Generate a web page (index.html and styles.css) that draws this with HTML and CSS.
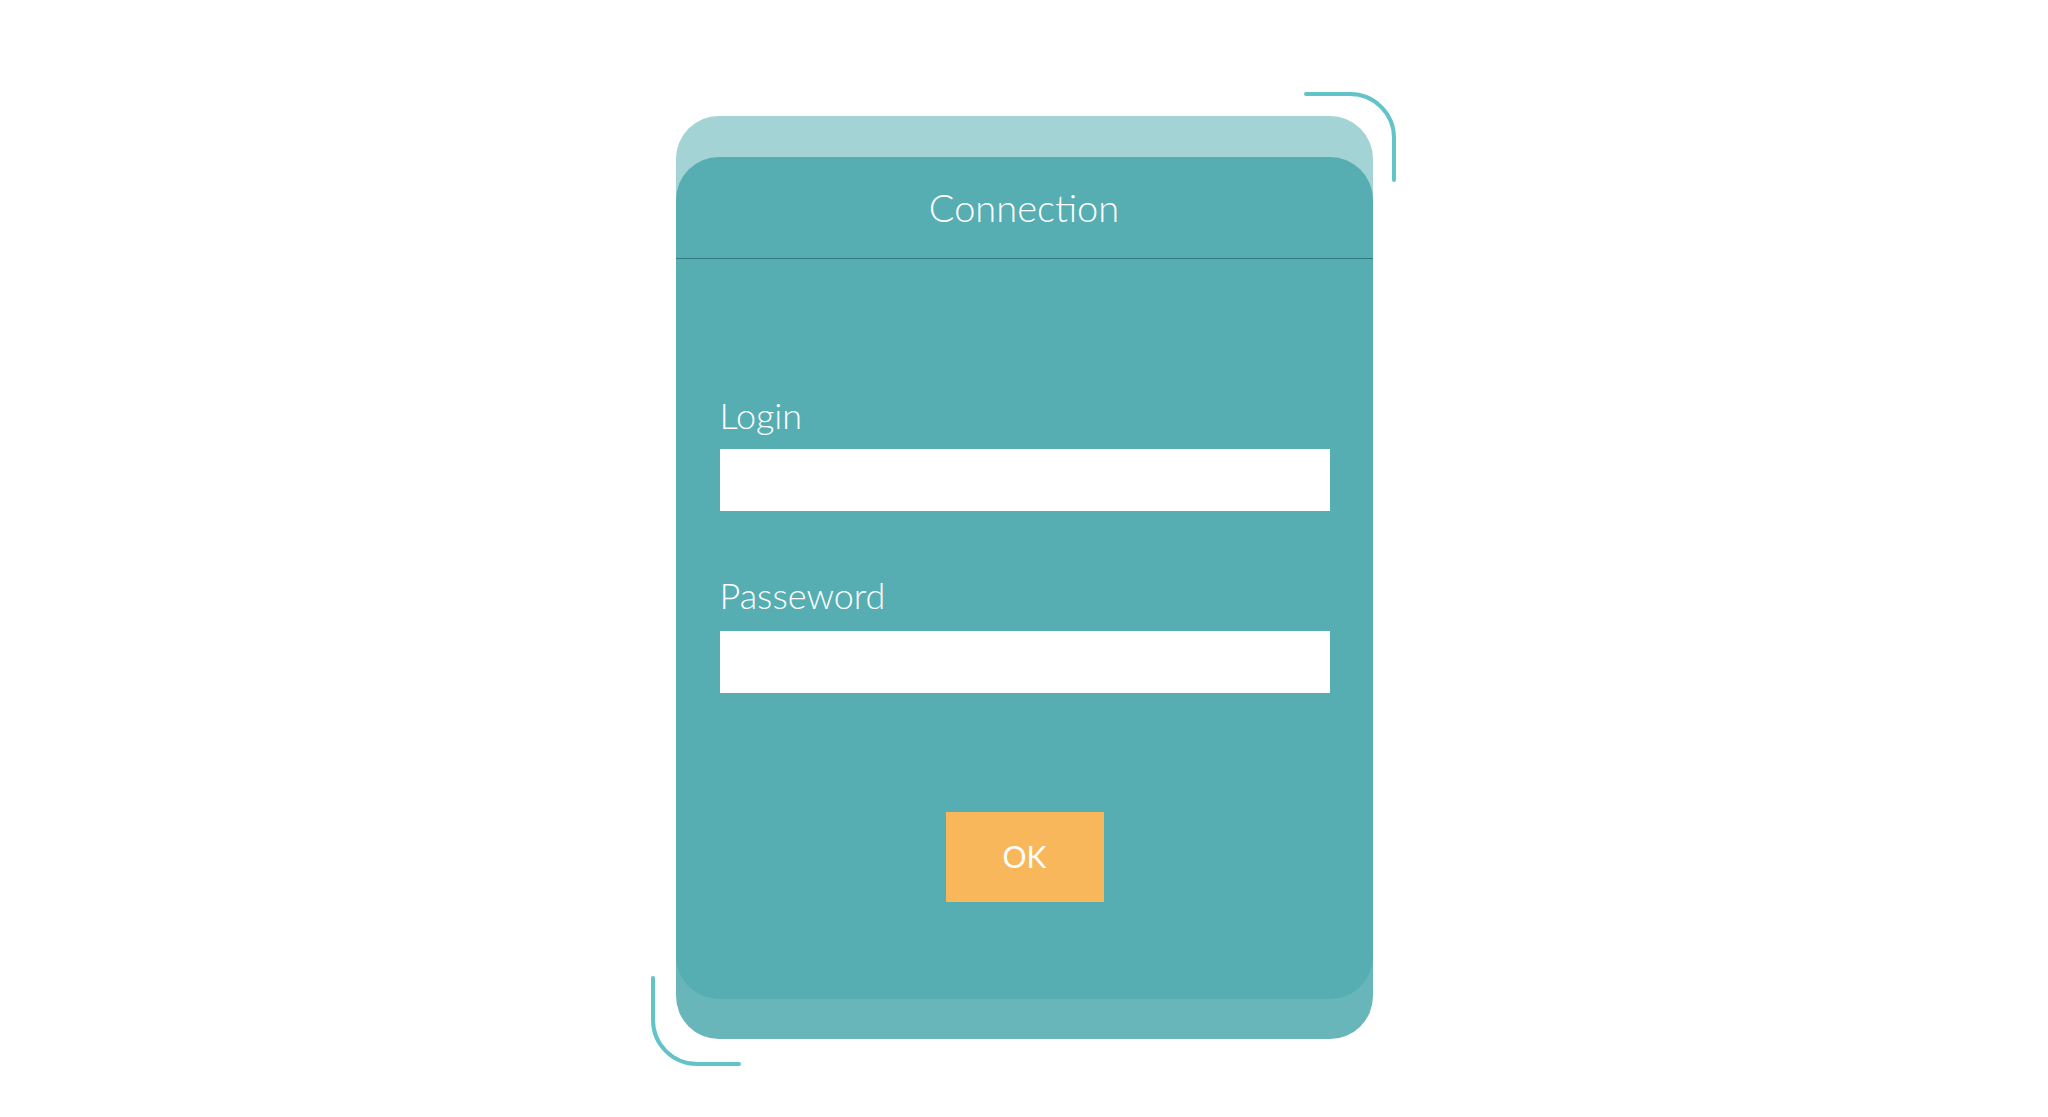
FILE: index.html
```html
<!DOCTYPE html>
<html lang="en">
<head>
<meta charset="utf-8">
<title>Connection</title>
<link rel="stylesheet" href="styles.css">
</head>
<body>
<main class="stage">
  <div class="frame">
    <svg class="bracket bracket-tr" width="92" height="90" viewBox="0 0 92 90" aria-hidden="true">
      <path d="M2 2 H46 A44 44 0 0 1 90 46 V88" fill="none" stroke="#62c4c8" stroke-width="4" stroke-linecap="round"/>
    </svg>
    <svg class="bracket bracket-bl" width="90" height="90" viewBox="0 0 90 90" aria-hidden="true">
      <path d="M2 2 V44 A44 44 0 0 0 46 88 H88" fill="none" stroke="#62c4c8" stroke-width="4" stroke-linecap="round"/>
    </svg>
    <section class="card">
      <header class="card-header">Connection</header>
      <form class="card-body">
        <label class="field-label" for="login">Login</label>
        <input class="field-input" id="login" type="text">
        <label class="field-label field-label-second" for="password">Passeword</label>
        <input class="field-input" id="password" type="password">
        <button class="ok-button" type="button">OK</button>
      </form>
    </section>
  </div>
</main>
</body>
</html>
```

FILE: styles.css
```css
html, body {
  margin: 0;
  padding: 0;
  background: #ffffff;
}

body {
  font-family: Lato, "Open Sans", "Liberation Sans", sans-serif;
  color: #ffffff;
}

.stage {
  box-sizing: border-box;
  min-height: 1117px;
  padding: 116px 0 78px;
  display: flex;
  justify-content: center;
  align-items: flex-start;
}

.frame {
  position: relative;
  width: 697px;
  padding: 41px 0 40px;
  border-radius: 43px;
  background: linear-gradient(#a3d3d4 0%, #a3d3d4 50%, #68b6ba 50%, #68b6ba 100%);
}

.bracket {
  position: absolute;
  display: block;
  overflow: visible;
}

.bracket-tr {
  top: -24px;
  right: -23px;
}

.bracket-bl {
  bottom: -27px;
  left: -25px;
}

.card {
  background: #56aeb3;
  border-radius: 43px;
  overflow: hidden;
}

.card-header {
  box-sizing: border-box;
  height: 102px;
  border-bottom: 1px solid #2f7a7e;
  display: flex;
  align-items: center;
  justify-content: center;
  font-size: 38px;
  font-weight: 300;
  line-height: 1;
  padding-bottom: 2px;
}

.card-body {
  display: flex;
  flex-direction: column;
  padding: 138px 43px 97px 44px;
  margin: 0;
}

.field-label {
  display: block;
  font-size: 36px;
  font-weight: 300;
  line-height: 36px;
  height: 36px;
  margin-bottom: 16px;
}

.field-label-second {
  margin-top: 66px;
  margin-bottom: 18px;
}

.field-input {
  display: block;
  box-sizing: border-box;
  width: 100%;
  height: 62px;
  margin: 0;
  border: 0;
  padding: 0 16px;
  background: #ffffff;
  font-family: inherit;
  font-size: 24px;
  outline: none;
}

.ok-button {
  align-self: center;
  width: 158px;
  height: 90px;
  margin-top: 119px;
  border: 0;
  padding: 0 0 3px;
  background: #f8b75a;
  color: #ffffff;
  font-family: inherit;
  font-size: 30px;
  font-weight: 400;
  cursor: pointer;
}
```
